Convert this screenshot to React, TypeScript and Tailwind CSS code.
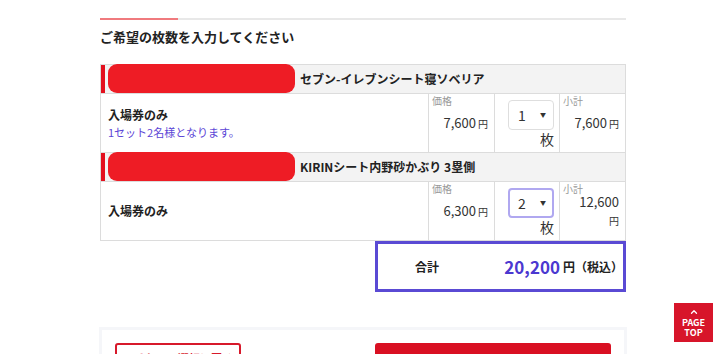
import { ChevronLeft, ChevronUp } from 'lucide-react';

interface Ticket {
    name: string;
    note?: string;
    price: string;
    qty: number;
    subtotal: string;
    focused?: boolean;
}

const tickets: Ticket[] = [
    { name: 'セブン-イレブンシート寝ソベリア', note: '1セット2名様となります。', price: '7,600', qty: 1, subtotal: '7,600' },
    { name: 'KIRINシート内野砂かぶり 3塁側', price: '6,300', qty: 2, subtotal: '12,600', focused: true },
];

function TicketBlock({ t }: { t: Ticket }) {
    return (
        <div className="border-t border-[#dcdcdc]">
            <div className="flex h-[28px] items-center bg-[#f3f3f3]">
                <div className="w-[4px] self-stretch bg-[#e3101e]" />
                <div className="ml-[3px] h-[29px] w-[187px] -mt-[1px] rounded-[9px] bg-[#ee1c25]" />
                <span className="ml-[5px] text-[12px] font-bold text-[#222]">{t.name}</span>
            </div>
            <div className="grid h-[59px] grid-cols-[327px_66px_65px_66px] border-t border-[#dcdcdc]">
                <div className="flex flex-col justify-center px-[7px]">
                    <p className="text-[12px] font-bold leading-[18px] text-[#222]">入場券のみ</p>
                    {t.note && <p className="text-[11px] leading-[17px] text-[#5b45d6]">{t.note}</p>}
                </div>
                <div className="relative flex items-center justify-end border-l border-[#dcdcdc] pr-[6px]">
                    <span className="absolute left-[3px] top-[1px] text-[10px] leading-[12px] text-[#999]">価格</span>
                    <span className="text-[13px] leading-[18px] text-[#333]">
                        {t.price}
                        <span className="ml-[2px] text-[10px]">円</span>
                    </span>
                </div>
                <div className="flex flex-col items-end justify-center border-l border-[#dcdcdc] pr-[5px]">
                    <div
                        className={`flex h-[30px] w-[46px] items-center justify-between rounded-[4px] bg-white ${t.focused ? 'border-2 border-[#b0a8f0] pl-[8px] pr-[6px]' : 'border border-[#dedede] pl-[9px] pr-[7px]'
                            }`}
                    >
                        <span className="text-[14px] leading-none text-[#333]">{t.qty}</span>
                        <span className="text-[6px] leading-none text-[#333]">▼</span>
                    </div>
                    <span className="mt-[1px] text-[14px] leading-[16px] text-[#333]">枚</span>
                </div>
                <div className="relative flex items-center justify-end border-l border-[#dcdcdc] pl-[10px] pr-[6px]">
                    <span className="absolute left-[3px] top-[1px] text-[10px] leading-[12px] text-[#999]">小計</span>
                    <span className="text-right text-[13px] leading-[18px] text-[#333]">
                        {t.subtotal}
                        <span className="ml-[2px] text-[10px]">円</span>
                    </span>
                </div>
            </div>
        </div>
    );
}

export default function App() {
    return (
        <div className="relative min-h-[354px] bg-white font-['Noto_Sans_CJK_JP',sans-serif]">
            <div className="ml-[100px] w-[526px] pt-[18px]">
                <div className="flex h-[2px] bg-[#e8e8e8]">
                    <div className="w-[78px] bg-[#f07a7e]" />
                </div>
                <h2 className="mt-[7px] text-[13px] font-bold leading-[20px] text-[#222]">ご希望の枚数を入力してください</h2>

                <div className="mt-[17px] border-x border-b border-[#dcdcdc]">
                    {tickets.map((t) => (
                        <TicketBlock key={t.name} t={t} />
                    ))}
                </div>

                <div className="ml-auto flex h-[51px] w-[251px] items-center border-[3px] border-[#5a4ad4] pl-[37px] pr-0">
                    <span className="text-[12px] font-bold text-[#222]">合計</span>
                    <span className="ml-auto text-[17px] font-bold leading-none text-[#4b38d0]">20,200</span>
                    <span className="ml-[3px] text-[12px] font-bold text-[#222]">円（税込）</span>
                </div>
            </div>

            <div className="ml-[99px] mt-[35px] w-[528px] border-[3px] border-b-0 border-[#f5f6f9] px-[13px] pt-[13px]">
                <div className="flex items-start justify-between">
                    <div className="flex h-[30px] w-[126px] items-center gap-[3px] whitespace-nowrap rounded-[3px] border-2 border-[#d7192b] px-[6px] text-[11px] font-bold text-[#d7192b]">
                        <ChevronLeft size={11} strokeWidth={3} />
                        チケット選択に戻る
                    </div>
                    <div className="h-[30px] w-[236px] rounded-[3px] bg-[#d91022]" />
                </div>
            </div>

            <div className="fixed bottom-[12px] right-[7px] flex h-[39px] w-[39px] flex-col items-center bg-[#d7152a] pt-[4px] text-white">
                <ChevronUp size={10} strokeWidth={3} />
                <span className="mt-[1px] text-[9px] font-bold leading-[10px]">PAGE</span>
                <span className="text-[9px] font-bold leading-[10px]">TOP</span>
            </div>
        </div>
    );
}
